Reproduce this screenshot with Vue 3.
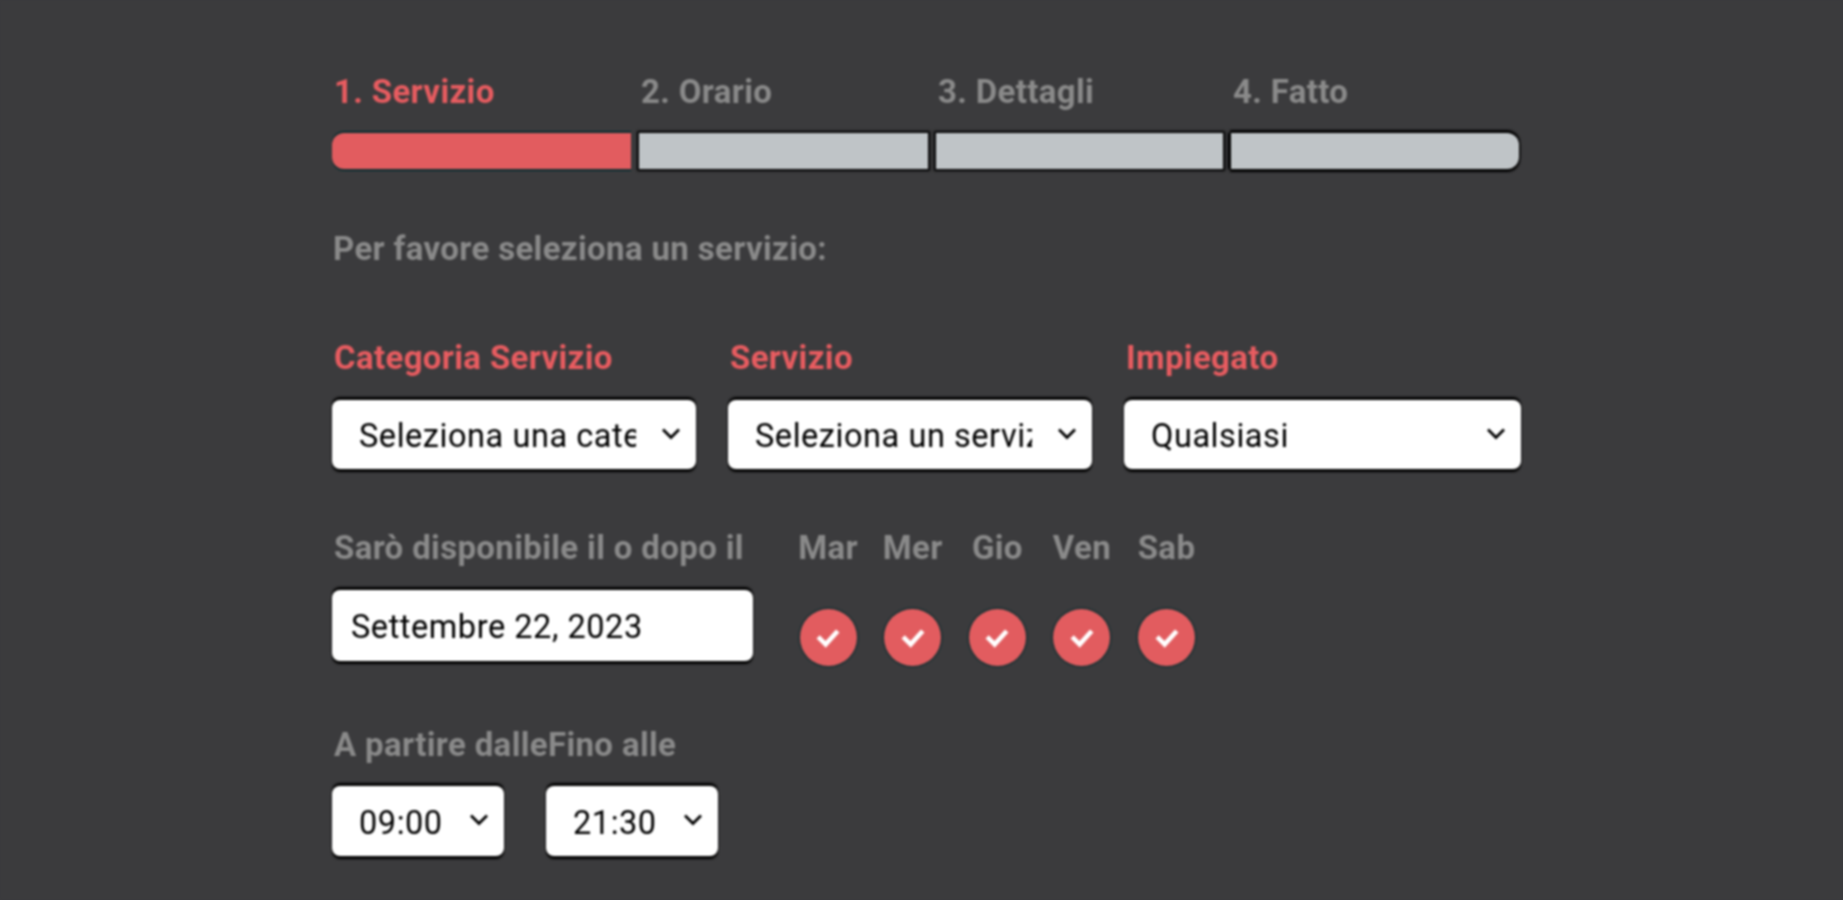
<script setup>
const steps = [
  { label: '1. Servizio', active: true },
  { label: '2. Orario', active: false },
  { label: '3. Dettagli', active: false },
  { label: '4. Fatto', active: false },
]
const days = ['Mar', 'Mer', 'Gio', 'Ven', 'Sab']
</script>

<template>
  <main class="page">
    <div class="wizard">
      <ol class="steps">
        <li v-for="s in steps" :key="s.label" class="step" :class="{ active: s.active }">
          <span class="step-label">{{ s.label }}</span>
          <span class="step-bar"></span>
        </li>
      </ol>

      <p class="intro">Per favore seleziona un servizio:</p>

      <div class="fields">
        <label class="field">
          <span class="red">Categoria Servizio</span>
          <span class="select-wrap">
            <select class="control"><option>Seleziona una categoria</option></select>
            <svg class="chev" viewBox="0 0 20 13" fill="none" stroke="#000" stroke-width="2.8"><path d="M2 2.5l8 8 8-8" /></svg>
          </span>
        </label>
        <label class="field">
          <span class="red">Servizio</span>
          <span class="select-wrap">
            <select class="control"><option>Seleziona un servizio</option></select>
            <svg class="chev" viewBox="0 0 20 13" fill="none" stroke="#000" stroke-width="2.8"><path d="M2 2.5l8 8 8-8" /></svg>
          </span>
        </label>
        <label class="field">
          <span class="red">Impiegato</span>
          <span class="select-wrap">
            <select class="control"><option>Qualsiasi</option></select>
            <svg class="chev" viewBox="0 0 20 13" fill="none" stroke="#000" stroke-width="2.8"><path d="M2 2.5l8 8 8-8" /></svg>
          </span>
        </label>
      </div>

      <div class="avail">
        <label class="field date">
          <span class="grey">Sarò disponibile il o dopo il</span>
          <input class="control date-input" value="Settembre 22, 2023" />
        </label>
        <div class="days">
          <div v-for="d in days" :key="d" class="day">
            <span class="grey">{{ d }}</span>
            <span class="check">
              <svg viewBox="0 0 24 24" width="28" height="28" fill="none" stroke="#fff" stroke-width="4" stroke-linecap="square">
                <path d="M5 12.5l5 5 9-10" />
              </svg>
            </span>
          </div>
        </div>
      </div>

      <div class="times">
        <div class="time-labels grey"><span>A partire dalle</span><span>Fino alle</span></div>
        <div class="time-controls">
          <span class="select-wrap time">
            <select class="control"><option>09:00</option></select>
            <svg class="chev" viewBox="0 0 20 13" fill="none" stroke="#000" stroke-width="2.8"><path d="M2 2.5l8 8 8-8" /></svg>
          </span>
          <span class="select-wrap time">
            <select class="control"><option>21:30</option></select>
            <svg class="chev" viewBox="0 0 20 13" fill="none" stroke="#000" stroke-width="2.8"><path d="M2 2.5l8 8 8-8" /></svg>
          </span>
        </div>
      </div>
    </div>
  </main>
</template>

<style>
html, body { background: #3b3b3d; }
</style>

<style scoped>
.page {
  height: 900px;
  overflow: hidden;
  box-sizing: border-box;
  padding: 76px 322px 0 332px;
  background: #3b3b3d;
  font-family: Roboto, sans-serif;
  font-size: 33px;
  letter-spacing: 0.35px;
  font-weight: 700;
  color: #8a8a8a;
  filter: blur(0.8px);
}
.steps {
  list-style: none;
  margin: 0;
  padding: 0;
  display: grid;
  grid-template-columns: 299px 289px 287px 288px;
  column-gap: 8px;
}
.step { display: flex; flex-direction: column; }
.step-label { padding-left: 2px; line-height: 32px; white-space: nowrap; }
.step.active .step-label { color: #e85c60; }
.step-bar {
  margin-top: 25px;
  height: 36px;
  background: #bfc4c7;
  box-shadow: 0 0 2px 2px #000;
}
.step:first-child .step-bar {
  border-radius: 12px 0 0 12px;
  background: #e25c5f;
  box-shadow: 0 2px 1px 0 #0c2f31, 0 -2px 1px 0 #0c2f31;
}
.step:last-child .step-bar {
  border-radius: 0 12px 12px 0;
  box-shadow: 0 2px 2px 1px #000, 0 -2px 2px 1px #000, -3px 0 2px 0 #000;
}
.intro { margin: 64px 0 0 1px; line-height: 32px; }
.red { color: #e85c60; padding-left: 2px; line-height: 32px; }
.grey { padding-left: 2px; line-height: 32px; }
.fields {
  margin-top: 77px;
  display: grid;
  grid-template-columns: 364px 364px 397px;
  column-gap: 32px;
}
.field { display: flex; flex-direction: column; }
.select-wrap { position: relative; display: block; }
.control {
  display: block;
  width: 100%;
  margin: 0;
  box-sizing: border-box;
  background: #fff;
  color: #000;
  border: 0;
  border-radius: 8px;
  box-shadow: 0 3px 2px 0 #000, 0 -3px 2px 0 #000;
  font-family: Roboto, sans-serif;
  font-size: 32.5px;
  letter-spacing: 0.55px;
  font-weight: 400;
  height: 69px;
  padding: 3px 60px 0 27px;
  appearance: none;
}
.chev {
  position: absolute;
  right: 15px;
  top: 27px;
  width: 20px;
  height: 13px;
  pointer-events: none;
}
.fields .select-wrap { margin-top: 26px; }
.avail { margin-top: 63px; display: flex; align-items: flex-start; }
.date { width: 421px; }
.date .control { margin-top: 26px; height: 71px; padding: 3px 19px 0; outline: none; }
.days { margin-left: 46px; display: flex; gap: 26.2px; }
.day { width: 58.4px; display: flex; flex-direction: column; align-items: center; white-space: nowrap; }
.day .grey { padding: 0; }
.check {
  margin-top: 45px;
  width: 57px;
  height: 57px;
  border-radius: 50%;
  background: #e25c5f;
  box-shadow: 0 0 2px 1px #0c2f31;
  display: flex;
  align-items: center;
  justify-content: center;
}
.times { margin-top: 63px; }
.time-labels { display: flex; }
.time-labels span { white-space: nowrap; }
.time-controls { margin-top: 25px; display: flex; gap: 42px; }
.time { width: 172px; }
.time .control { height: 70px; }
</style>
